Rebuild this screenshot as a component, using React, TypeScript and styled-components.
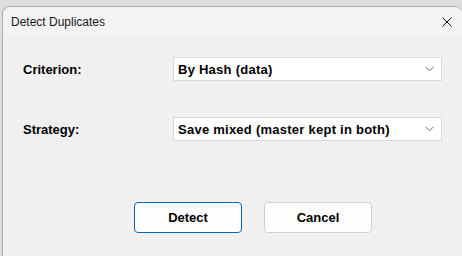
import React from 'react';
import styled, { createGlobalStyle } from 'styled-components';

const GlobalStyle = createGlobalStyle`
  html, body {
    margin: 0;
    padding: 0;
    background: #dedede;
    width: 462px;
    height: 256px;
    overflow: hidden;
  }
`;

const Desktop = styled.div`
  padding: 6px 0 0 2px;
  height: 250px;
`;

const Window = styled.div`
  display: flex;
  flex-direction: column;
  width: 459px;
  height: 260px;
  border: 1px solid #a9a9a9;
  border-right: none;
  border-radius: 8px 8px 0 0;
  background: #f0f0f0;
  overflow: hidden;
  font-family: 'Liberation Sans', Arial, sans-serif;
`;

const TitleBar = styled.div`
  display: flex;
  align-items: center;
  justify-content: space-between;
  height: 29px;
  padding: 0 9px 0 8px;
  background: #f3f3f3;
`;

const Title = styled.span`
  font-size: 12px;
  color: #1a1a1a;
  padding-top: 1px;
`;

const CloseButton = styled.span`
  display: flex;
  width: 12px;
  height: 12px;
  align-items: center;
  justify-content: center;
  margin-top: 1px;
`;

const Client = styled.div`
  padding: 21px 0 0 20px;
`;

const Form = styled.div`
  display: grid;
  grid-template-columns: 150px 269px;
  row-gap: 36px;
  align-items: center;
`;

const Label = styled.span`
  font-size: 13px;
  font-weight: bold;
  color: #000;
`;

const Combo = styled.div`
  display: flex;
  align-items: center;
  justify-content: space-between;
  box-sizing: border-box;
  height: 24px;
  padding: 0 7px 0 4px;
  background: #fff;
  border: 1px solid #dadada;
  font-size: 13px;
  font-weight: bold;
  letter-spacing: 0.25px;
  color: #000;
`;

const Buttons = styled.div`
  display: flex;
  gap: 22px;
  margin: 61px 0 0 111px;
`;

const Button = styled.button<{ $default?: boolean }>`
  width: 108px;
  height: 31px;
  box-sizing: border-box;
  border-radius: 4px;
  border: 1px solid ${(p) => (p.$default ? '#0067c0' : '#d0d0d0')};
  background: #fdfdfd;
  font-family: 'Liberation Sans', Arial, sans-serif;
  font-size: 13px;
  font-weight: bold;
  color: #000;
  padding: 0;
`;

const Chevron = () => (
  <svg width="9" height="6" viewBox="0 0 9 6">
    <path d="M0.5 0.8 L4.5 4.8 L8.5 0.8" fill="none" stroke="#707070" strokeWidth="1" />
  </svg>
);

const rows = [
  { label: 'Criterion:', value: 'By Hash (data)' },
  { label: 'Strategy:', value: 'Save mixed (master kept in both)' },
];

export default function App() {
  return (
    <>
      <GlobalStyle />
      <Desktop>
        <Window>
          <TitleBar>
            <Title>Detect Duplicates</Title>
            <CloseButton>
              <svg width="10" height="10" viewBox="0 0 10 10">
                <path d="M0.5 0.5 L9.5 9.5 M9.5 0.5 L0.5 9.5" stroke="#111" strokeWidth="1" />
              </svg>
            </CloseButton>
          </TitleBar>
          <Client>
            <Form>
              {rows.map((row) => (
                <React.Fragment key={row.label}>
                  <Label>{row.label}</Label>
                  <Combo>
                    <span>{row.value}</span>
                    <Chevron />
                  </Combo>
                </React.Fragment>
              ))}
            </Form>
            <Buttons>
              <Button $default>Detect</Button>
              <Button>Cancel</Button>
            </Buttons>
          </Client>
        </Window>
      </Desktop>
    </>
  );
}
